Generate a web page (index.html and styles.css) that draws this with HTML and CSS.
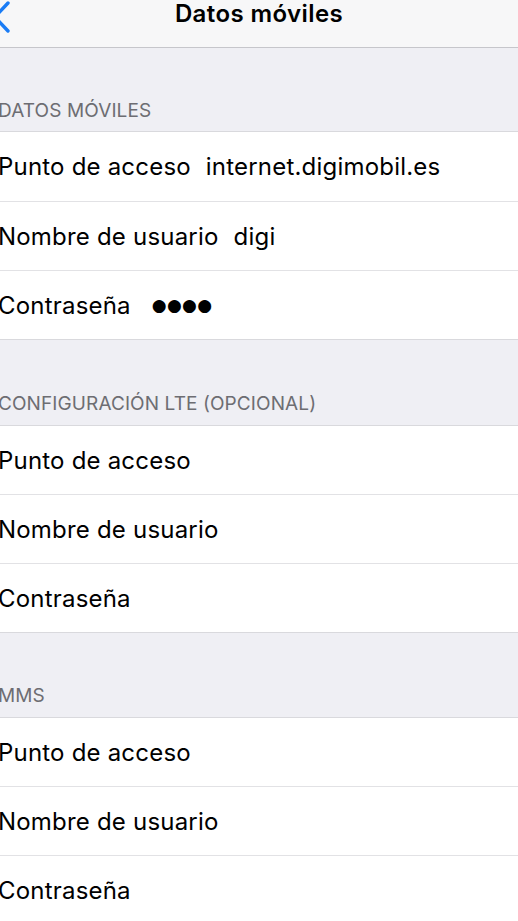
FILE: index.html
```html
<!DOCTYPE html>
<html lang="es">
<head>
<meta charset="utf-8">
<link rel="stylesheet" href="styles.css">
</head>
<body>
<div class="screen">
  <header class="navbar">
    <svg class="back" width="14" height="34" viewBox="0 0 14 34"><path d="M8 3 L-5 17 L8 31" fill="none" stroke="#1a7cf5" stroke-width="3.4" stroke-linecap="round" stroke-linejoin="round"/></svg>
    <h1 class="title">Datos móviles</h1>
  </header>

  <section class="group">
    <div class="group-header first">DATOS MÓVILES</div>
    <ul class="rows">
      <li class="row"><span class="label">Punto de acceso</span><span class="value">internet.digimobil.es</span></li>
      <li class="row"><span class="label">Nombre de usuario</span><span class="value">digi</span></li>
      <li class="row"><span class="label">Contraseña</span><span class="value dots">●●●●</span></li>
    </ul>
  </section>

  <section class="group">
    <div class="group-header">CONFIGURACIÓN LTE (OPCIONAL)</div>
    <ul class="rows">
      <li class="row"><span class="label">Punto de acceso</span></li>
      <li class="row"><span class="label">Nombre de usuario</span></li>
      <li class="row"><span class="label">Contraseña</span></li>
    </ul>
  </section>

  <section class="group">
    <div class="group-header last">MMS</div>
    <ul class="rows">
      <li class="row"><span class="label">Punto de acceso</span></li>
      <li class="row"><span class="label">Nombre de usuario</span></li>
      <li class="row"><span class="label">Contraseña</span></li>
    </ul>
  </section>
</div>
</body>
</html>
```

FILE: styles.css
```css
* { box-sizing: border-box; }
html, body {
  margin: 0;
  padding: 0;
  background: #efeff4;
  overflow: hidden;
}
body {
  font-family: Inter, "Noto Sans", sans-serif;
  color: #000;
}
.screen {
  width: 518px;
  height: 921px;
  overflow: hidden;
}
.navbar {
  position: relative;
  height: 48px;
  background: #f7f7f8;
  border-bottom: 1px solid #c6c6cb;
  display: flex;
  align-items: center;
  justify-content: center;
}
.back {
  position: absolute;
  left: 0;
  top: 0;
}
.title {
  margin: 0;
  font-size: 24px;
  font-weight: 600;
  letter-spacing: 0.4px;
  padding-bottom: 20px;
}
.group-header {
  height: 85px;
  display: flex;
  align-items: flex-end;
  padding: 0 0 10px 0;
  margin-left: -2px;
  font-size: 19px;
  color: #6d6d72;
  letter-spacing: 0.1px;
}
.group-header.first {
  height: 83px;
  padding-bottom: 9px;
}
.group-header.last {
  height: 84px;
}
.rows {
  list-style: none;
  margin: 0;
  padding: 0;
  background: #fff;
  border-top: 1px solid #d9d9dd;
  border-bottom: 1px solid #d9d9dd;
}
.row {
  height: 69px;
  display: flex;
  align-items: center;
  gap: 15px;
  margin-left: -2px;
  font-size: 24px;
  letter-spacing: 0.2px;
}
.row:first-child {
  height: 68px;
}
.group-header.first + .rows .row:first-child {
  height: 69px;
}
.row + .row {
  border-top: 1px solid #e2e2e5;
}
.dots {
  font-family: "DejaVu Sans", sans-serif;
  font-size: 17px;
  letter-spacing: 0.3px;
  margin-left: 6px;
}
```
